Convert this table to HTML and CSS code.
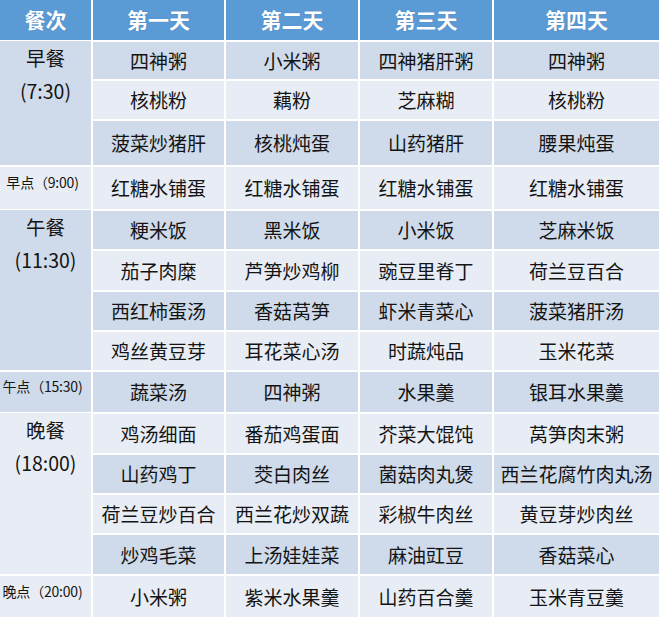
FILE: index.html
```html
<!DOCTYPE html>
<html lang="zh-CN">
<head>
<meta charset="utf-8">
<title>一周食谱</title>
<link rel="stylesheet" href="styles.css">
</head>
<body>
<div class="menu">
  <div class="hd">餐次</div><div class="hd">第一天</div><div class="hd">第二天</div><div class="hd">第三天</div><div class="hd">第四天</div>

  <div class="meal dark span3">早餐<br>(7:30)</div>
  <div class="c dark">四神粥</div><div class="c dark">小米粥</div><div class="c dark">四神猪肝粥</div><div class="c dark">四神粥</div>
  <div class="c light">核桃粉</div><div class="c light">藕粉</div><div class="c light">芝麻糊</div><div class="c light">核桃粉</div>
  <div class="c dark">菠菜炒猪肝</div><div class="c dark">核桃炖蛋</div><div class="c dark">山药猪肝</div><div class="c dark">腰果炖蛋</div>

  <div class="snack light">早点（9:00)</div>
  <div class="c light">红糖水铺蛋</div><div class="c light">红糖水铺蛋</div><div class="c light">红糖水铺蛋</div><div class="c light">红糖水铺蛋</div>

  <div class="meal dark span4">午餐<br>(11:30)</div>
  <div class="c dark">粳米饭</div><div class="c dark">黑米饭</div><div class="c dark">小米饭</div><div class="c dark">芝麻米饭</div>
  <div class="c light">茄子肉糜</div><div class="c light">芦笋炒鸡柳</div><div class="c light">豌豆里脊丁</div><div class="c light">荷兰豆百合</div>
  <div class="c dark">西红柿蛋汤</div><div class="c dark">香菇莴笋</div><div class="c dark">虾米青菜心</div><div class="c dark">菠菜猪肝汤</div>
  <div class="c light">鸡丝黄豆芽</div><div class="c light">耳花菜心汤</div><div class="c light">时蔬炖品</div><div class="c light">玉米花菜</div>

  <div class="snack dark">午点（15:30)</div>
  <div class="c dark">蔬菜汤</div><div class="c dark">四神粥</div><div class="c dark">水果羹</div><div class="c dark">银耳水果羹</div>

  <div class="meal light span4">晚餐<br>(18:00)</div>
  <div class="c light">鸡汤细面</div><div class="c light">番茄鸡蛋面</div><div class="c light">芥菜大馄饨</div><div class="c light">莴笋肉末粥</div>
  <div class="c dark">山药鸡丁</div><div class="c dark">茭白肉丝</div><div class="c dark">菌菇肉丸煲</div><div class="c dark">西兰花腐竹肉丸汤</div>
  <div class="c light">荷兰豆炒百合</div><div class="c light">西兰花炒双蔬</div><div class="c light">彩椒牛肉丝</div><div class="c light">黄豆芽炒肉丝</div>
  <div class="c dark">炒鸡毛菜</div><div class="c dark">上汤娃娃菜</div><div class="c dark">麻油豇豆</div><div class="c dark">香菇菜心</div>

  <div class="snack light">晚点（20:00)</div>
  <div class="c light">小米粥</div><div class="c light">紫米水果羹</div><div class="c light">山药百合羹</div><div class="c light">玉米青豆羹</div>
</div>
</body>
</html>
```

FILE: styles.css
```css
html, body {
  margin: 0;
  padding: 0;
  background: #ffffff;
}

body {
  width: 659px;
  height: 617px;
  overflow: hidden;
  font-family: "Noto Sans CJK SC", "Noto Sans", "Liberation Sans", sans-serif;
  color: #141414;
}

.menu {
  display: grid;
  grid-template-columns: 91px 131px 132px 132px 1fr;
  grid-template-rows: 40px 37px 38px 44px 42px 38px 39px 38px 38px 40px 39px 38px 38px 39px 41px;
  gap: 2px;
  background: #ffffff;
  width: 659px;
}

.hd {
  background: #5b9bd5;
  color: #ffffff;
  font-weight: 700;
  font-size: 21px;
  display: flex;
  align-items: center;
  justify-content: center;
  padding-bottom: 3px;
  text-shadow: 0 0 1px rgba(40, 80, 140, 0.5);
}

.c {
  display: flex;
  align-items: center;
  justify-content: center;
  font-size: 19px;
  white-space: nowrap;
  padding-bottom: 1px;
}

.dark {
  background: #cfdbea;
}

.light {
  background: #e8edf5;
}

.meal {
  font-size: 19.5px;
  line-height: 33px;
  text-align: center;
  padding-top: 0;
  margin-top: -1px;
}

.span3 {
  grid-row: span 3;
}

.span4 {
  grid-row: span 4;
}

.snack {
  font-size: 14px;
  display: flex;
  align-items: center;
  justify-content: center;
  white-space: nowrap;
  padding-right: 6px;
  padding-bottom: 12px;
  letter-spacing: -0.2px;
}
```
